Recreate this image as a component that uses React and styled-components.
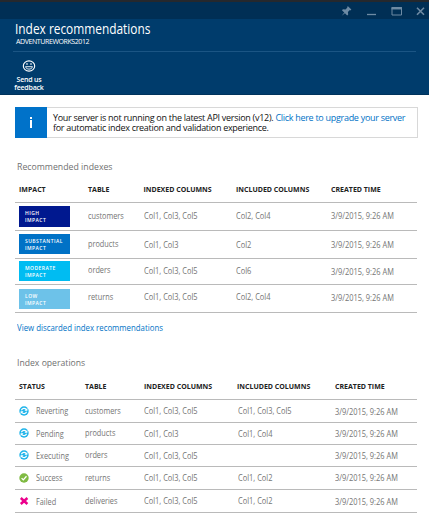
import React from 'react';
import styled, { createGlobalStyle } from 'styled-components';

const Global = createGlobalStyle`
  * { box-sizing: border-box; }
  body { margin: 0; background: #fff; font-family: "Open Sans", "Noto Sans", sans-serif; }
`;

const Blade = styled.main`
  width: 429px;
  height: 531px;
  overflow: hidden;
  background: #fff;
`;

const Header = styled.header`
  height: 95px;
  background: #003c6c;
  border-top: 2px solid #25282d;
  border-bottom: 1px solid #00335c;
  color: #fff;
`;

const WindowBar = styled.div`
  height: 17px;
  background: #002f55;
  display: flex;
  justify-content: flex-end;
  svg { display: block; }
`;

const Heading = styled.div`
  margin: 0 13px 0 13px;
  padding: 0 0 0 2px;
  height: 33px;
  border-bottom: 1px solid #1b5584;
`;

const Narrow = styled.span`
  display: inline-block;
  transform: scaleX(${(p) => p.$ratio});
  transform-origin: left center;
`;

const Title = styled.h1`
  margin: 0;
  font-size: 14.5px;
  font-weight: 400;
  line-height: 19px;
  white-space: nowrap;
`;

const Subtitle = styled.div`
  padding-left: 1px;
  font-size: 7px;
  line-height: 8px;
  letter-spacing: -0.4px;
`;

const Command = styled.button`
  all: unset;
  display: flex;
  flex-direction: column;
  align-items: center;
  width: 34px;
  margin: 7px 0 0 12px;
  font-size: 7px;
  font-weight: 600;
  line-height: 7.5px;
  text-align: center;
  letter-spacing: -0.2px;
  svg { display: block; margin-bottom: 3px; }
`;

const Notice = styled.section`
  margin: 12px 11px 0 15px;
  height: 31px;
  display: flex;
  border: 1px solid #d8d8d8;
  border-left: 0;
`;

const NoticeIcon = styled.div`
  width: 32px;
  margin: -1px 0;
  background: #0072c9;
  display: grid;
  place-items: center;
`;

const NoticeText = styled.p`
  margin: 5px 0 0 6px;
  font-size: 9px;
  line-height: 10px;
  color: #111;
  white-space: nowrap;
  letter-spacing: -0.29px;
`;

const Link = styled.a`
  color: #0072c6;
  text-decoration: none;
`;

const Section = styled.section`
  margin: ${(p) => p.$top}px 12px 0 15px;
`;

const SectionTitle = styled.h2`
  margin: 0 0 0 2px;
  height: 14px;
  font-size: 9.5px;
  font-weight: 400;
  line-height: 14px;
  color: #707070;
`;

const Row = styled.div`
  display: grid;
  grid-template-columns: ${(p) => p.$columns};
  height: ${(p) => p.$height}px;
  padding-left: 4px;
  border-bottom: 1px solid #bababa;
`;

const HeadCell = styled.div`
  padding-top: ${(p) => p.$drop}px;
  font-size: 7px;
  font-weight: 700;
  line-height: 10px;
  color: #222;
  white-space: nowrap;
`;

const CellBox = styled.div`
  padding-top: ${(p) => p.$drop}px;
  padding-left: ${(p) => p.$indent || 0}px;
  font-size: 8.5px;
  line-height: 12px;
  color: #747474;
  white-space: nowrap;
`;

const Cell = ({ drop, indent, ratio = 0.875, children }) => (
  <CellBox $drop={drop} $indent={indent}>
    <Narrow $ratio={ratio}>{children}</Narrow>
  </CellBox>
);

const Impact = styled.div`
  width: 51px;
  height: ${(p) => p.$height}px;
  margin-top: ${(p) => p.$drop}px;
  padding: 4px 0 0 6px;
  background: ${(p) => p.$color};
  color: #fff;
  font-size: 5px;
  font-weight: 600;
  line-height: 7px;
  letter-spacing: 0.45px;
`;

const Status = styled.div`
  display: flex;
  align-items: flex-start;
  svg { flex: none; margin-top: ${(p) => p.$iconDrop}px; }
`;

const Discarded = styled(Link)`
  display: block;
  margin: 8px 0 0 17px;
  height: 14px;
  font-size: 9px;
  line-height: 14px;
  white-space: nowrap;
`;

const WindowControls = () => (
  <svg width="94" height="17" viewBox="0 2 94 17" fill="none" stroke="#6e8ba4">
    <g transform="translate(11 11.5) rotate(45)" fill="#6e8ba4" stroke="none">
      <path d="M-2.400-5.200h4.800v1.400h-.7v2.800l2 1.600v1.400H-3.700V.6l2-1.600v-2.800h-.7zM-.5 2h1l-.5 4z" />
    </g>
    <path d="M32 14.500h9" strokeWidth="1.300" />
    <path d="M57 7.500h9.500v7.500H57z" />
    <path d="M56.500 8.300h10.500" strokeWidth="2.300" />
    <path d="M82 7.700l7 7m0-7l-7 7" strokeWidth="1.600" />
  </svg>
);

const Smile = () => (
  <svg width="14" height="14" viewBox="0 0 14 14" fill="none" stroke="#fff">
    <ellipse cx="7" cy="7" rx="5.700" ry="5.100" strokeWidth="1.100" />
    <path d="M3.500 7.700c.7 3.200 6.300 3.200 7 0z" strokeWidth=".9" />
    <path d="M5 4.200v1.500M9 4.200v1.500" strokeWidth="1.300" />
  </svg>
);

const InfoGlyph = () => (
  <svg width="4" height="13" viewBox="0 0 4 13" fill="#fff">
    <rect x="1" y="1" width="2" height="2" />
    <rect x="1" y="4" width="2" height="8" />
  </svg>
);

const StatusIcon = ({ kind }) => (
  <svg width="10" height="10" viewBox="0 0 10 10" fill="none">
    {kind === 'sync' && (
      <>
        <circle cx="5" cy="5" r="4.700" fill="#1eb4ea" />
        <path d="M2.400 4.300C3.200 2 6 1.900 7.300 3.600M7.600 5.700C6.800 8 4 8.100 2.700 6.400" stroke="#fff" strokeWidth="1.200" />
        <path d="M8.400 2v2.800H5.400zM1.600 8V5.200h3z" fill="#fff" />
      </>
    )}
    {kind === 'ok' && (
      <>
        <circle cx="5" cy="5" r="4.700" fill="#7fba42" />
        <path d="M2.600 5.100l1.700 1.800 3.200-3.700" stroke="#fff" strokeWidth="1.300" />
      </>
    )}
    {kind === 'fail' && <path d="M1.800 2l6.600 6M8.400 2L1.800 8" stroke="#ec008c" strokeWidth="2.500" />}
  </svg>
);

const impactColumns = '69px 55.500px 92.500px 95px 1fr';
const statusColumns = '66px 59px 93px 98px 1fr';

const indexes = [
  { height: 28, level: 'HIGH', color: '#00188f', badge: [3, 21], table: ['customers', 7], indexed: ['Col1, Col3, Col5', 7], included: ['Col2, Col4', 7], time: 7 },
  { height: 28, level: 'SUBSTANTIAL', color: '#0072c6', badge: [3, 20], table: ['products', 7], indexed: ['Col1, Col3', 8], included: ['Col2', 8], time: 8 },
  { height: 26, level: 'MODERATE', color: '#00bcf2', badge: [2, 20], table: ['orders', 5], indexed: ['Col1, Col3, Col5', 6], included: ['Col6', 6], time: 7 },
  { height: 28, level: 'LOW', color: '#6dc2e9', badge: [4, 20], table: ['returns', 6], indexed: ['Col1, Col3, Col5', 6], included: ['Col2, Col4', 6], time: 7 },
];

const operations = [
  { height: 23, icon: 'sync', status: ['Reverting', 5, 6], table: ['customers', 5], indexed: ['Col1, Col3, Col5', 5], included: ['Col1, Col3, Col5', 5], time: 6 },
  { height: 22, icon: 'sync', status: ['Pending', 5, 5], table: ['products', 4], indexed: ['Col1, Col3', 5], included: ['Col1, Col4', 5], time: 5 },
  { height: 22, icon: 'sync', status: ['Executing', 5, 5], table: ['orders', 4], indexed: ['Col1, Col3, Col5', 5], included: ['', 5], time: 5 },
  { height: 23, icon: 'ok', status: ['Success', 5, 6], table: ['returns', 5], indexed: ['Col1, Col3, Col5', 5], included: ['Col1, Col2', 5], time: 5 },
  { height: 23, icon: 'fail', status: ['Failed', 6, 6], table: ['deliveries', 5], indexed: ['Col1, Col3, Col5', 5], included: ['Col1, Col2', 5], time: 6 },
];

const Head = ({ labels, columns, height, drop }) => (
  <Row $columns={columns} $height={height}>
    {labels.map((label) => <HeadCell key={label} $drop={drop}>{label}</HeadCell>)}
  </Row>
);

export default function App() {
  return (
    <Blade>
      <Global />
      <Header>
        <WindowBar><WindowControls /></WindowBar>
        <Heading>
          <Title><Narrow $ratio={0.82}>Index recommendations</Narrow></Title>
          <Subtitle>ADVENTUREWORKS2012</Subtitle>
        </Heading>
        <Command><Smile />Send us<br />feedback</Command>
      </Header>
      <Notice>
        <NoticeIcon><InfoGlyph /></NoticeIcon>
        <NoticeText>
          Your server is not running on the latest API version (v12). <Link>Click here to upgrade your server</Link>
          <br />
          for automatic index creation and validation experience.
        </NoticeText>
      </Notice>
      <Section $top={22}>
        <SectionTitle><Narrow $ratio={0.92}>Recommended indexes</Narrow></SectionTitle>
        <Head labels={['IMPACT', 'TABLE', 'INDEXED COLUMNS', 'INCLUDED COLUMNS', 'CREATED TIME']} columns={impactColumns} height={29} drop={11} />
        {indexes.map((r) => (
          <Row key={r.level} $columns={impactColumns} $height={r.height}>
            <Impact $color={r.color} $drop={r.badge[0]} $height={r.badge[1]}>{r.level}<br />IMPACT</Impact>
            <Cell drop={r.table[1]} ratio={0.86}>{r.table[0]}</Cell>
            <Cell drop={r.indexed[1]}>{r.indexed[0]}</Cell>
            <Cell drop={r.included[1]}>{r.included[0]}</Cell>
            <Cell drop={r.time}>3/9/2015, 9:26 AM</Cell>
          </Row>
        ))}
      </Section>
      <Discarded><Narrow $ratio={0.87}>View discarded index recommendations</Narrow></Discarded>
      <Section $top={21}>
        <SectionTitle><Narrow $ratio={0.91}>Index operations</Narrow></SectionTitle>
        <Head labels={['STATUS', 'TABLE', 'INDEXED COLUMNS', 'INCLUDED COLUMNS', 'CREATED TIME']} columns={statusColumns} height={30} drop={12} />
        {operations.map((r) => (
          <Row key={r.status[0]} $columns={statusColumns} $height={r.height}>
            <Status $iconDrop={r.status[2]}>
              <StatusIcon kind={r.icon} />
              <Cell drop={r.status[1]} indent={7} ratio={0.86}>{r.status[0]}</Cell>
            </Status>
            <Cell drop={r.table[1]} ratio={0.86}>{r.table[0]}</Cell>
            <Cell drop={r.indexed[1]}>{r.indexed[0]}</Cell>
            <Cell drop={r.included[1]} indent={1}>{r.included[0]}</Cell>
            <Cell drop={r.time}>3/9/2015, 9:26 AM</Cell>
          </Row>
        ))}
      </Section>
    </Blade>
  );
}
